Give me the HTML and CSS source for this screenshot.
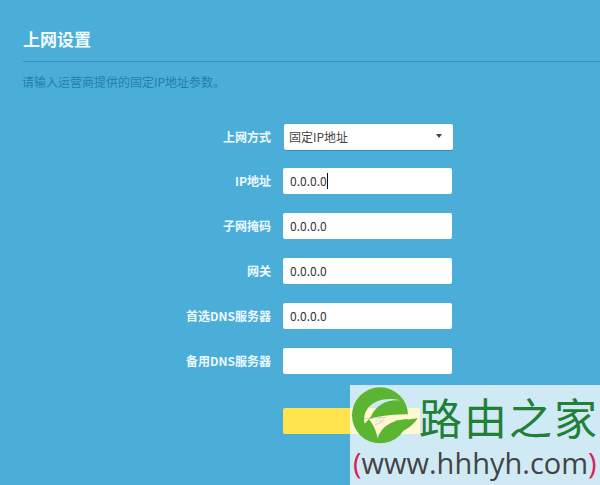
FILE: index.html
```html
<!DOCTYPE html>
<html lang="zh-CN">
<head>
    <meta charset="UTF-8">
    <meta name="viewport" content="width=device-width, initial-scale=1.0">
    <title>上网设置</title>
    <link rel="stylesheet" href="styles.css">
</head>
<body>
    <div class="page">
        <h2 class="title">上网设置</h2>
        <p class="hint">请输入运营商提供的固定IP地址参数。</p>

        <div class="form">
            <div class="row row-select">
                <label>上网方式</label>
                <div class="select"><span>固定IP地址</span><i class="arrow"></i></div>
            </div>
            <div class="row">
                <label>IP地址</label>
                <div class="field"><input type="text" value="0.0.0.0"><i class="caret"></i></div>
            </div>
            <div class="row">
                <label>子网掩码</label>
                <div class="field"><input type="text" value="0.0.0.0"></div>
            </div>
            <div class="row">
                <label>网关</label>
                <div class="field"><input type="text" value="0.0.0.0"></div>
            </div>
            <div class="row">
                <label>首选DNS服务器</label>
                <div class="field"><input type="text" value="0.0.0.0"></div>
            </div>
            <div class="row">
                <label>备用DNS服务器</label>
                <div class="field"><input type="text"></div>
            </div>
            <div class="row row-btn">
                <span></span>
                <button>下一步</button>
            </div>
        </div>
    </div>

    <div class="watermark">
        <div class="wm-top">
            <svg class="wm-logo" width="58" height="58" viewBox="17 17 174 174">
                <mask id="leaf" maskUnits="userSpaceOnUse" x="0" y="0" width="270" height="210">
                    <rect width="270" height="210" fill="#fff"/>
                    <path d="M58 130 C48 84 92 42 166 60 C126 56 92 72 76 110 Z" fill="#000"/>
                    <path d="M70 116 C105 106 150 102 200 102 L200 116 C150 116 112 130 97 174 C92 150 84 132 70 116 Z" fill="#000"/>
                </mask>
                <circle cx="104" cy="105" r="84" fill="#5cb531" mask="url(#leaf)"/>
                <path d="M150 121 C170 119 195 118 217 114 C205 135 180 150 160 158 Z" fill="#5cb531"/>
            </svg>
            <span class="wm-name">路由之家</span>
        </div>
        <div class="wm-url"><b>(</b>www.hhhyh.com<b>)</b></div>
    </div>
</body>
</html>
```

FILE: styles.css
```css
html, body {
    margin: 0;
    height: 100%;
}
body {
    background: #4aaed9;
    font-family: "Noto Sans CJK SC", "Liberation Sans", sans-serif;
    font-size: 12px;
    overflow: hidden;
    position: relative;
}
.page {
    padding: 29px 0 0 23px;
}
.title {
    margin: 0;
    height: 32px;
    line-height: 20px;
    font-size: 17px;
    font-weight: bold;
    color: #f2fbff;
    border-bottom: 1px solid #3a8eb8;
}
.hint {
    margin: 11px 0 0 -1px;
    line-height: 17px;
    color: #267ea9;
}
.form {
    margin: 34px 0 0 -23px;
}
.row {
    display: grid;
    grid-template-columns: 271px 169px;
    column-gap: 12px;
    align-items: center;
    height: 26px;
    margin-bottom: 19px;
}
.row-select {
    margin-bottom: 18px;
}
.row label {
    text-align: right;
    font-weight: bold;
    color: #eef9ff;
    padding: 0 0 2px 1px;
}
.select {
    margin-left: 1px;
    margin-right: -1px;
    height: 26px;
    background: #fff;
    border-radius: 2px;
    box-shadow: 0 1px 0 #3a8eb8;
    padding: 0 11px 2px 5px;
    box-sizing: border-box;
    display: flex;
    align-items: center;
    justify-content: space-between;
    color: #444;
}
.arrow {
    width: 0;
    height: 0;
    border-left: 3.5px solid transparent;
    border-right: 3.5px solid transparent;
    border-top: 4px solid #444;
}
.field {
    position: relative;
    height: 26px;
}
.field input {
    display: block;
    box-sizing: border-box;
    width: 100%;
    height: 26px;
    border: none;
    border-radius: 2px;
    padding: 0 7px 2px;
    font: inherit;
    color: #333;
    background: #fff;
    outline: none;
}
.caret {
    position: absolute;
    left: 44px;
    top: 5px;
    width: 1px;
    height: 16px;
    background: #111;
}
.row-btn {
    margin-top: 34px;
}
button {
    width: 137px;
    height: 26px;
    border: none;
    border-radius: 2px;
    padding: 0 0 6px 33px;
    background: #ffe44d;
    font: inherit;
    color: #555;
}
.watermark {
    position: absolute;
    left: 350px;
    top: 385px;
    width: 250px;
    height: 100px;
    background: rgba(255, 255, 255, 0.74);
}
.wm-top {
    display: flex;
    align-items: center;
    gap: 10px;
    padding: 1px 0 0 1px;
    height: 58px;
}
.wm-logo {
    flex: none;
    overflow: visible;
}
.wm-name {
    font-size: 43px;
    line-height: 44px;
    letter-spacing: 2px;
    padding-top: 2px;
    color: #217f37;
    white-space: nowrap;
}
.wm-url {
    font-family: "Open Sans", "Liberation Sans", sans-serif;
    font-size: 29px;
    line-height: 38px;
    padding-left: 3px;
    color: #444;
    white-space: nowrap;
}
.wm-url b {
    font-weight: normal;
    color: #d8205a;
}
```
